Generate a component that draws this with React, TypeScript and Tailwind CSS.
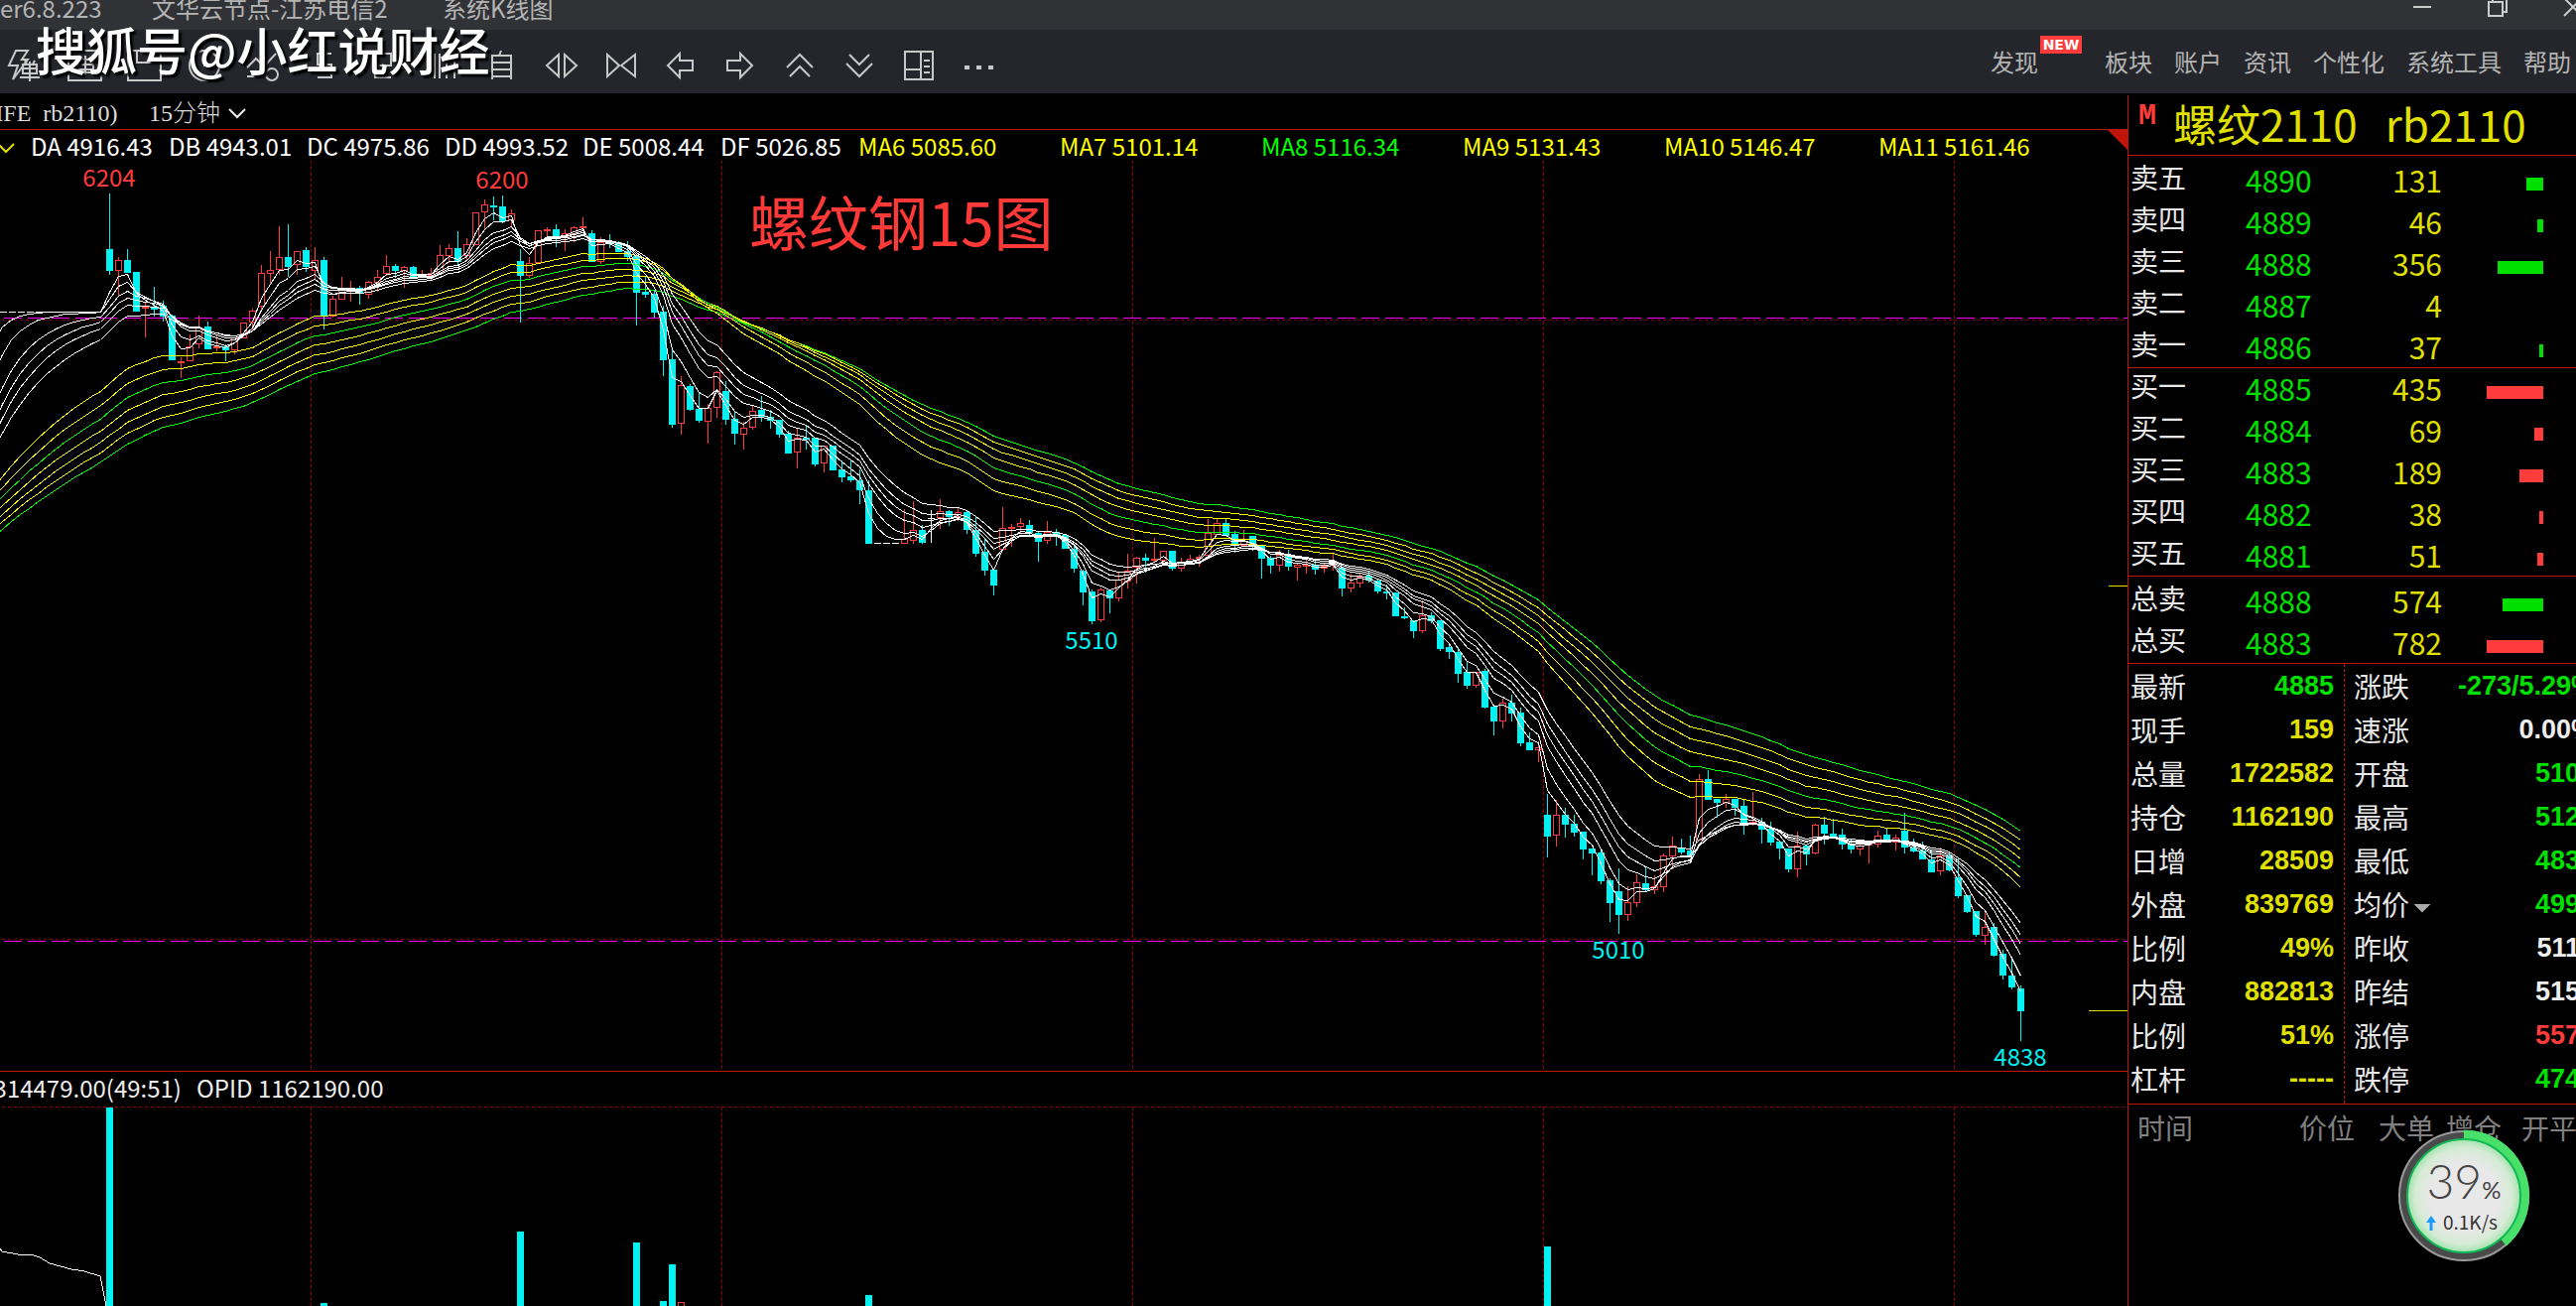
import { ReactNode } from "react";
import clsx from "clsx";

type Candle = [high: number, top: number, bottom: number, low: number, up: 0 | 1];

type BookRow = {
	label: string,
	price: number,
	volume: number,
	bar: number,
}

type Stat = {
	label: string,
	value: string,
	tone: "green" | "yellow" | "white" | "red",
	cut?: boolean,
	menu?: boolean,
}

const STEP = 9;
const FIRST_X = 110;
const TOP = 162;
const VOLUME_TOP = 1115;
const FLAT = 314;

const candles: Candle[] = [
	[195, 251, 273, 277, 0], [259, 262, 273, 298, 1], [251, 262, 275, 275, 0], [274, 274, 314, 314, 0], [305, 309, 311, 340, 1],
	[289, 309, 312, 319, 0], [303, 308, 319, 324, 0], [317, 318, 363, 363, 0], [360, 364, 366, 381, 1], [337, 349, 364, 364, 1],
	[318, 330, 347, 351, 1], [324, 329, 352, 352, 0], [337, 349, 351, 354, 1], [347, 349, 353, 364, 0], [340, 340, 353, 357, 1],
	[325, 325, 341, 341, 1], [311, 313, 325, 333, 1], [267, 275, 309, 313, 1], [253, 272, 276, 286, 1], [228, 259, 272, 277, 1],
	[226, 259, 269, 279, 0], [253, 253, 267, 277, 1], [249, 252, 269, 274, 0], [249, 262, 273, 282, 1], [259, 262, 319, 332, 0],
	[298, 301, 319, 320, 1], [279, 292, 302, 302, 1], [283, 291, 293, 304, 1], [288, 290, 296, 307, 0], [283, 284, 297, 301, 1],
	[272, 279, 285, 294, 1], [257, 268, 276, 278, 1], [266, 268, 273, 280, 0], [268, 269, 273, 290, 1], [268, 269, 280, 280, 0],
	[272, 277, 279, 280, 1], [270, 275, 278, 283, 1], [247, 257, 276, 277, 1], [246, 250, 258, 265, 1], [233, 250, 264, 267, 0],
	[240, 246, 258, 262, 1], [214, 214, 247, 247, 1], [201, 206, 214, 231, 1], [198, 207, 209, 222, 0], [197, 208, 223, 225, 0],
	[211, 215, 222, 230, 1], [251, 263, 278, 325, 0], [259, 265, 278, 280, 1], [232, 232, 265, 265, 1], [229, 231, 233, 238, 1],
	[226, 231, 239, 249, 0], [231, 235, 239, 253, 1], [228, 229, 236, 244, 1], [219, 228, 230, 233, 1], [232, 235, 264, 264, 0],
	[239, 244, 264, 266, 1], [236, 243, 245, 250, 0], [243, 244, 254, 254, 0], [243, 253, 259, 263, 0], [257, 258, 295, 328, 0],
	[278, 294, 297, 300, 0], [292, 296, 315, 320, 0], [308, 314, 363, 379, 0], [353, 362, 428, 431, 0], [379, 388, 427, 438, 1],
	[387, 389, 413, 414, 0], [395, 412, 424, 426, 0], [407, 411, 425, 447, 1], [374, 375, 411, 421, 1], [384, 394, 423, 428, 0],
	[414, 422, 437, 448, 0], [425, 431, 438, 453, 1], [409, 414, 431, 433, 1], [399, 413, 420, 425, 0], [413, 420, 424, 432, 0],
	[423, 423, 438, 441, 0], [434, 437, 457, 457, 0], [432, 441, 456, 472, 1], [429, 441, 443, 453, 0], [441, 441, 468, 470, 0],
	[449, 449, 467, 476, 1], [449, 449, 474, 474, 0], [464, 473, 481, 486, 0], [463, 480, 484, 486, 0], [473, 484, 494, 508, 0],
	[484, 494, 548, 548, 0], [547, 547, 547, 547, 0], [547, 547, 547, 547, 0], [547, 547, 547, 547, 0], [513, 543, 548, 548, 1],
	[505, 534, 545, 548, 1], [529, 534, 547, 548, 0], [514, 522, 522, 547, 0], [503, 515, 522, 533, 1], [514, 515, 521, 530, 0],
	[511, 516, 521, 525, 1], [515, 516, 534, 538, 0], [521, 534, 558, 561, 0], [543, 556, 575, 580, 0], [574, 574, 590, 600, 0],
	[511, 532, 554, 554, 1], [528, 531, 533, 551, 1], [522, 527, 531, 537, 1], [524, 529, 537, 540, 0], [536, 537, 546, 566, 0],
	[525, 536, 545, 548, 1], [533, 536, 539, 550, 0], [538, 539, 553, 553, 0], [548, 553, 573, 577, 0], [574, 575, 597, 610, 0],
	[594, 596, 626, 629, 0], [592, 594, 625, 627, 1], [594, 595, 603, 618, 0], [576, 584, 603, 606, 1], [558, 575, 586, 593, 1],
	[561, 562, 572, 588, 1], [558, 562, 565, 577, 0], [542, 563, 565, 567, 1], [555, 555, 565, 567, 1], [555, 555, 573, 575, 0],
	[562, 566, 573, 576, 1], [559, 563, 566, 567, 1], [559, 561, 563, 571, 1], [523, 537, 560, 560, 1], [522, 527, 539, 539, 1],
	[523, 527, 540, 540, 0], [535, 538, 548, 557, 0], [534, 545, 550, 550, 1], [540, 540, 550, 555, 0], [549, 549, 563, 583, 0],
	[560, 562, 570, 578, 0], [554, 559, 570, 576, 1], [554, 559, 571, 575, 0], [567, 569, 572, 585, 1], [563, 569, 571, 578, 1],
	[565, 569, 574, 579, 0], [567, 570, 573, 577, 1], [557, 567, 570, 575, 1], [572, 572, 593, 601, 0], [578, 587, 593, 597, 1],
	[578, 581, 588, 592, 1], [575, 580, 585, 587, 0], [583, 585, 596, 598, 0], [589, 596, 598, 604, 0], [597, 597, 621, 621, 0],
	[612, 621, 623, 624, 0], [625, 625, 636, 643, 0], [605, 620, 636, 638, 1], [617, 620, 626, 628, 0], [625, 625, 654, 656, 0],
	[649, 652, 657, 664, 0], [652, 657, 679, 688, 0], [667, 677, 691, 694, 0], [677, 677, 691, 693, 1], [674, 676, 713, 714, 0],
	[712, 712, 727, 741, 0], [704, 708, 727, 734, 1], [700, 708, 719, 727, 0], [713, 718, 749, 752, 0], [738, 748, 756, 756, 0],
	[747, 753, 756, 768, 1], [800, 821, 843, 864, 0], [806, 821, 842, 853, 1], [814, 821, 831, 844, 0], [821, 830, 839, 843, 0],
	[838, 838, 856, 866, 0], [855, 855, 860, 882, 0], [857, 859, 888, 891, 0], [885, 887, 910, 929, 0], [875, 898, 922, 941, 0],
	[893, 909, 922, 928, 1], [881, 889, 910, 914, 1], [873, 890, 897, 899, 0], [882, 893, 897, 901, 1], [860, 862, 894, 899, 1],
	[843, 852, 863, 876, 1], [845, 854, 859, 861, 0], [842, 857, 862, 862, 0], [780, 785, 847, 847, 1], [776, 785, 806, 806, 0],
	[805, 805, 809, 824, 0], [800, 805, 809, 814, 1], [805, 805, 814, 822, 0], [805, 812, 830, 841, 0], [798, 828, 830, 832, 1],
	[824, 828, 836, 850, 0], [828, 835, 849, 852, 0], [847, 848, 855, 866, 0], [855, 855, 876, 879, 0], [838, 852, 876, 884, 1],
	[852, 852, 861, 872, 0], [830, 831, 860, 861, 1], [823, 831, 840, 851, 0], [825, 840, 843, 845, 0], [835, 841, 851, 856, 0],
	[845, 850, 856, 860, 0], [850, 852, 856, 862, 1], [847, 850, 852, 870, 1], [837, 842, 851, 854, 1], [834, 841, 849, 849, 0],
	[841, 844, 849, 857, 1], [819, 837, 854, 860, 0], [845, 854, 858, 859, 0], [848, 857, 866, 866, 0], [856, 866, 879, 879, 0],
	[854, 862, 878, 882, 1], [858, 862, 877, 878, 0], [865, 884, 903, 905, 0], [902, 902, 919, 920, 0], [918, 918, 942, 944, 0],
	[919, 934, 943, 952, 1], [930, 934, 963, 964, 0], [957, 961, 983, 987, 0], [966, 983, 995, 997, 0], [993, 996, 1019, 1049, 0],
];

// period, colour, distance below the flat price where the line enters on the left
const averages: [number, string, number][] = [
	[60, "#00ff00", 226], [55, "#ffff00", 219], [50, "#ffff00", 212], [45, "#ffff00", 204],
	[40, "#00ff00", 196], [35, "#ffff00", 187], [30, "#ffff00", 177],
	[15, "#ffffff", 139], [12, "#ffffff", 126], [10, "#ffffff", 114], [8, "#ffffff", 98], [5, "#ffffff", 64], [3, "#ffffff", 30],
];

const gridX = [313, 727, 1141, 1555, 1969];

const priceLabels = [
	{ text: "6204", x: 110, y: 188, color: "#ff3c3c" },
	{ text: "6200", x: 506, y: 190, color: "#ff3c3c" },
	{ text: "5510", x: 1100, y: 654, color: "#00f0f0" },
	{ text: "5010", x: 1631, y: 966, color: "#00f0f0" },
	{ text: "4838", x: 2036, y: 1074, color: "#00f0f0" },
];

const volumes = [
	{ x: 110, y: 1116 }, { x: 326, y: 1313 }, { x: 524, y: 1241 }, { x: 641, y: 1252 },
	{ x: 668, y: 1311 }, { x: 677, y: 1274 }, { x: 875, y: 1305 }, { x: 1559, y: 1256 },
];

const dLines = ["DA 4916.43", "DB 4943.01", "DC 4975.86", "DD 4993.52", "DE 5008.44", "DF 5026.85"];
const maLines = ["MA6 5085.60", "MA7 5101.14", "MA8 5116.34", "MA9 5131.43", "MA10 5146.47", "MA11 5161.46"];

const sells: BookRow[] = [
	{ label: "卖五", price: 4890, volume: 131, bar: 17 },
	{ label: "卖四", price: 4889, volume: 46, bar: 6 },
	{ label: "卖三", price: 4888, volume: 356, bar: 46 },
	{ label: "卖二", price: 4887, volume: 4, bar: 0 },
	{ label: "卖一", price: 4886, volume: 37, bar: 4 },
];

const buys: BookRow[] = [
	{ label: "买一", price: 4885, volume: 435, bar: 57 },
	{ label: "买二", price: 4884, volume: 69, bar: 9 },
	{ label: "买三", price: 4883, volume: 189, bar: 24 },
	{ label: "买四", price: 4882, volume: 38, bar: 4 },
	{ label: "买五", price: 4881, volume: 51, bar: 6 },
];

const totals: BookRow[] = [
	{ label: "总卖", price: 4888, volume: 574, bar: 41 },
	{ label: "总买", price: 4883, volume: 782, bar: 57 },
];

const leftStats: Stat[] = [
	{ label: "最新", value: "4885", tone: "green" },
	{ label: "现手", value: "159", tone: "yellow" },
	{ label: "总量", value: "1722582", tone: "yellow" },
	{ label: "持仓", value: "1162190", tone: "yellow" },
	{ label: "日增", value: "28509", tone: "yellow" },
	{ label: "外盘", value: "839769", tone: "yellow" },
	{ label: "比例", value: "49%", tone: "yellow" },
	{ label: "内盘", value: "882813", tone: "yellow" },
	{ label: "比例", value: "51%", tone: "yellow" },
	{ label: "杠杆", value: "-----", tone: "yellow" },
];

const rightStats: Stat[] = [
	{ label: "涨跌", value: "-273/5.29%", tone: "green" },
	{ label: "速涨", value: "0.00%", tone: "white" },
	{ label: "开盘", value: "510", tone: "green", cut: true },
	{ label: "最高", value: "512", tone: "green", cut: true },
	{ label: "最低", value: "483", tone: "green", cut: true },
	{ label: "均价", value: "499", tone: "green", cut: true, menu: true },
	{ label: "昨收", value: "511", tone: "white", cut: true },
	{ label: "昨结", value: "515", tone: "white", cut: true },
	{ label: "涨停", value: "557", tone: "red", cut: true },
	{ label: "跌停", value: "474", tone: "green", cut: true },
];

const menus = ["板块", "账户", "资讯", "个性化", "系统工具", "帮助"];

const tools: { name: string, icon: ReactNode }[] = [
	{ name: "闪电下单", icon: <><path d="M8 5H20L14 14H20L5 34L10 20H1Z" transform="translate(2 0)" /><path d="M17 19H31V28H17ZM17 23H31M24 16V36M14 32H34M19 15L21 19M29 15L27 19" /></> },
	{ name: "下单", icon: <><path d="M3 5H36V35H3Z" /><path d="M12 14H28V24H12ZM12 19H28M20 10V30M9 27H31" /></> },
	{ name: "窗口", icon: <path d="M3 5H36V35H3ZM12 5V17H28V5" /> },
	{ name: "时间", icon: <><circle cx="20" cy="20" r="15" /><path d="M20 11V20H28" /></> },
	{ name: "画线", icon: <><path d="M3 22L12 13L20 21L32 8M3 31H14" /><circle cx="28" cy="29" r="6" /></> },
	{ name: "周期", icon: <path d="M28 8H14V19H28V32H14" /> },
	{ name: "叠加", icon: <path d="M12 8H28V20H12ZM12 20V32H28" /> },
	{ name: "副图", icon: <path d="M12 8V33M17 8V33M24 8V33M32 8V33" /> },
	{ name: "自选", icon: <path d="M10 10H29V34M10 9V34M10 17H29M10 24H29M10 31H29M19 5L17 10" /> },
	{ name: "放宽", icon: <path d="M17 9V31L5 20ZM23 9V31L35 20Z" /> },
	{ name: "缩窄", icon: <path d="M6 9V31L18 20ZM34 9V31L20 20Z" /> },
	{ name: "左移", icon: <path d="M19 8V15H32V25H19V32L7 20Z" /> },
	{ name: "右移", icon: <path d="M20 8V15H7V25H20V32L32 20Z" /> },
	{ name: "上翻", icon: <path d="M7 22L20 9L33 22M10 31L20 21L30 31" /> },
	{ name: "下翻", icon: <path d="M7 18L20 31L33 18M10 9L20 19L30 9" /> },
	{ name: "布局", icon: <path d="M6 6H34V34H6ZM22 6V34M6 24H22M25 15H31M25 21H31M25 27H31" /> },
	{ name: "更多", icon: <path d="M6 22H11M18 22H23M30 22H35" strokeWidth="4" /> },
];

function emaPoints(period: number, offset: number){
	const a = 2 / (period + 1);
	let value = FLAT + offset;
	const points: string[] = [`-7,${Math.round(value) + 0.5}`];

	for (let i = -12; i < candles.length; i++){
		const c = candles[i];
		const close = i < 0 ? FLAT : c[4] ? c[1] : c[2];
		value = value + a * (close - value);
		points.push(`${FIRST_X + i * STEP + 0.5},${Math.round(value) + 0.5}`);
	}
	return points.join(" ");
}

function CandleShape({ candle, x }: { candle: Candle, x: number }){
	const [high, top, bottom, low, up] = candle;

	if (top === bottom){
		return <path d={`M${x - 3} ${top + 0.5}H${x + 4}M${x + 0.5} ${high}V${low}`} stroke="#fff" />
	}
	if (up){
		return(
			<g stroke="#ff3c3c" fill="none">
				<path d={`M${x + 0.5} ${high}V${top}M${x + 0.5} ${bottom}V${low}`} />
				<rect x={x - 2.5} y={top + 0.5} width={6} height={bottom - top - 1} />
			</g>
		)
	}
	return(
		<g fill="#00f2f2">
			<rect x={x} y={high} width={1} height={low - high} />
			<rect x={x - 3} y={top} width={7} height={Math.max(bottom - top, 2)} />
		</g>
	)
}

function PriceChart(){
	return(
		<svg className="block h-[917px] w-full shrink-0 font-['Noto_Sans_CJK_SC',sans-serif]" shapeRendering="crispEdges">
			<g transform={`translate(0 ${-TOP})`}>
				{gridX.map(x => <path key={x} d={`M${x + 0.5} 161V1079`} stroke="#8c0000" strokeDasharray="4 2" />)}
				{[322, 946].map(y => <path key={y} d={`M2 ${y + 0.5}H2600`} stroke="#8c0000" strokeDasharray="3 3" />)}
				{[320, 948].map(y => <path key={y} d={`M-20 ${y + 0.5}H2600`} stroke="#ff00ff" strokeDasharray="18 6" />)}
				<path d="M0 314.5H101" stroke="#fff" strokeDasharray="7 2" />
				{candles.map((candle, i) => <CandleShape key={i} candle={candle} x={FIRST_X + i * STEP} />)}
				{averages.map(([period, color, offset]) => (
					<polyline key={period} points={emaPoints(period, offset)} fill="none" stroke={color} />
				))}
				{priceLabels.map(({ text, x, y, color }) => (
					<text key={text} x={x} y={y} fill={color} fontSize={24} textAnchor="middle">{text}</text>
				))}
				<text x={755} y={248} fill="#ff3838" fontSize={60}>螺纹钢15图</text>
			</g>
		</svg>
	)
}

function VolumeChart(){
	return(
		<svg className="block min-h-0 w-full flex-1" shapeRendering="crispEdges">
			<g transform={`translate(0 ${-VOLUME_TOP})`}>
				{gridX.map(x => <path key={x} d={`M${x + 0.5} ${VOLUME_TOP}V1400`} stroke="#8c0000" strokeDasharray="4 2" />)}
				<path d="M2 1115.5H2600" stroke="#8c0000" strokeDasharray="3 3" />
				{volumes.map(({ x, y }) => <rect key={x} x={x - 3} y={y} width={7} height={300} fill="#00f2f2" />)}
				<rect x={683.5} y={1312.5} width={6} height={100} fill="none" stroke="#ff3c3c" />
				<path d="M0 1258L2 1261L18 1264L34 1265L40 1267L50 1273L72 1279L85 1281L101 1286L107 1316" fill="none" stroke="#fff" />
			</g>
		</svg>
	)
}

function BookTable({ rows, className }: { rows: BookRow[], className: string }){
	return(
		<div className={clsx("shrink-0 overflow-hidden border-b border-[#c01408]", className)}>
			<table className="w-[418px] table-fixed border-collapse">
				<colgroup>
					<col className="w-[118px]" />
					<col className="w-[72px]" />
					<col className="w-[126px]" />
					<col />
				</colgroup>
				<tbody>
					{rows.map(row => (
						<tr key={row.label} className="h-[42px] text-[30px] leading-[36px]">
							<th scope="row" className="p-0 pb-2 pl-0.5 text-left text-[28px] leading-[34px] font-normal text-[#e8e8e8]">{row.label}</th>
							<td className="p-0 pb-0.5 text-[#00e000]">{row.price}</td>
							<td className="p-0 pb-0.5 text-right text-[#e0e000]">{row.volume}</td>
							<td className="p-0 pt-1.5">
								<div
									className={clsx("ml-auto h-[13px]", row.label.includes("卖") ? "bg-[#00e000]" : "bg-[#ff3c3c]")}
									style={{ width: row.bar }}
								/>
							</td>
						</tr>
					))}
				</tbody>
			</table>
		</div>
	)
}

function StatList({ stats, className }: { stats: Stat[], className: string }){
	return(
		<dl className={className}>
			{stats.map((stat, i) => (
				<div key={i} className="flex h-11 items-center justify-between leading-[44px]">
					<dt className="flex items-center gap-1 text-[28px] text-[#e8e8e8]">
						{stat.label}
						{stat.menu && (
							<button aria-label="选择均价" className="mt-2 h-[9px] w-[18px] bg-[#aaa] [clip-path:polygon(0_0,100%_0,50%_100%)]" />
						)}
					</dt>
					<dd
						className={clsx(
							"font-['Liberation_Sans',sans-serif] text-[27px] font-bold",
							stat.tone === "green" && "text-[#00e000]",
							stat.tone === "yellow" && "text-[#e0e000]",
							stat.tone === "white" && "text-[#eee]",
							stat.tone === "red" && "text-[#ff3c3c]",
							stat.cut && "pr-[15px]"
						)}
					>
						{stat.value}
					</dd>
				</div>
			))}
		</dl>
	)
}

function SpeedBall(){
	return(
		<div className="absolute right-[46px] bottom-[44px] size-[134px]">
			<svg viewBox="0 0 134 134" className="size-full">
				<defs>
					<radialGradient id="ball">
						<stop offset="0.6" stopColor="#e8e8e8" />
						<stop offset="0.85" stopColor="#d6ebd6" />
						<stop offset="1" stopColor="#a4e4ac" />
					</radialGradient>
				</defs>
				<circle cx="67" cy="67" r="65" fill="#4a4a4a" stroke="#9a9a9a" strokeWidth="2" />
				<path d="M67 5A62 62 0 0 1 107 114" fill="none" stroke="#48e068" strokeWidth="9" />
				<circle cx="67" cy="67" r="57" fill="url(#ball)" stroke="#10b858" strokeWidth="2" />
				<path d="M34 87L39 94H35.500V102H32.500V94H29Z" fill="#1e9bff" />
			</svg>
			<div className="absolute inset-x-0 top-[27px] flex items-baseline justify-center font-['Lato',sans-serif] leading-[50px] text-[#444]">
				<span className="text-[48px] font-light">39</span>
				<span className="text-[24px]">%</span>
			</div>
			<div className="absolute top-[81px] left-[46px] text-[19px] leading-6 text-[#333]">0.1K/s</div>
		</div>
	)
}

export default function App(){
	return(
		<div className="relative flex h-screen min-h-[1316px] w-full flex-col overflow-hidden bg-black font-['Noto_Sans_CJK_SC',sans-serif]">
			<header className="flex h-[30px] shrink-0 items-start overflow-hidden bg-[#303236] text-[24px] leading-[16px] text-[#b4b4b4]">
				<span className="w-[153px]">er6.8.223</span>
				<span className="w-[293px]">文华云节点-江苏电信2</span>
				<span className="flex-1">系统K线图</span>
				<button aria-label="最小化" className="w-[76px]">
					<svg className="h-[30px] w-[20px]"><path d="M1 7H19" stroke="#ccc" strokeWidth="2" /></svg>
				</button>
				<button aria-label="还原" className="w-[76px]">
					<svg className="h-[30px] w-[22px]" fill="none" stroke="#ccc" strokeWidth="2"><path d="M1 2H15V16H1ZM5 2V-2H19V12H15" /></svg>
				</button>
				<button aria-label="关闭" className="w-[13px] overflow-hidden">
					<svg className="h-[30px] w-[20px]" fill="none" stroke="#ccc" strokeWidth="2"><path d="M1 -2L19 16M19 -2L1 16" /></svg>
				</button>
			</header>

			<nav className="flex h-16 shrink-0 items-center justify-between bg-[#24262c]">
				<div className="-ml-1 flex items-center pt-2">
					{tools.map(({ name, icon }) => (
						<button key={name} aria-label={name} className="flex w-[60px] justify-center">
							<svg className="size-10" viewBox="0 0 40 40" fill="none" stroke="#c8c8c8" strokeWidth="2">{icon}</svg>
						</button>
					))}
				</div>
				<div className="flex items-center gap-[22px] pr-[5px] text-[24px] text-[#b4b4b4]">
					<button className="relative mr-[45px]">
						发现
						<span className="absolute -top-2 left-[50px] h-[18px] w-[42px] bg-[#ff3c3c] text-center font-['DejaVu_Sans',sans-serif] text-[14px] leading-[18px] font-bold text-white">NEW</span>
					</button>
					{menus.map(menu => <button key={menu}>{menu}</button>)}
				</div>
			</nav>

			<main className="flex min-h-0 w-full flex-1">
				<section className="flex min-w-0 flex-1 flex-col">
					<div className="flex h-9 shrink-0 items-center overflow-hidden font-['Liberation_Serif','Noto_Sans_CJK_SC',serif] text-[24px] leading-[36px] font-light whitespace-pre text-[#ddd]">
						<span className="-ml-[14px] w-[164px] pt-1">HFE  rb2110)</span>
						<button className="flex items-center gap-2 pt-1">
							15分钟
							<svg className="h-[12px] w-[18px]" fill="none" stroke="#eee" strokeWidth="2"><path d="M1 2L9 10L17 2" /></svg>
						</button>
					</div>
					<div className="flex h-8 shrink-0 items-center border-t border-[#c01408] text-[24px] leading-[31px] whitespace-nowrap text-white">
						<button aria-label="指标" className="w-[31px]">
							<svg className="mt-1.5 h-[12px] w-[16px]" fill="none" stroke="#e0e000" strokeWidth="2"><path d="M-2 1L6 9L14 1" /></svg>
						</button>
						{dLines.map(text => <span key={text} className="w-[139px] shrink-0">{text}</span>)}
						{maLines.map(text => (
							<span key={text} className={clsx("shrink-0", text.startsWith("MA10") ? "w-[216px]" : "w-[203px]", text.startsWith("MA8") ? "text-[#00ff00]" : "text-[#ffff00]")}>{text}</span>
						))}
						<span className="ml-auto h-5 w-5 self-start bg-[#c01408] [clip-path:polygon(0_0,100%_0,100%_100%)]" />
					</div>
					<div className="relative">
						<PriceChart />
						<div className="absolute top-[428px] right-0 h-px w-[19px] bg-[#e0e000]" />
						<div className="absolute top-[856px] right-0 h-px w-[39px] bg-[#e0e000]" />
					</div>
					<div className="flex h-9 shrink-0 border-t border-[#c01408] text-[24px] leading-[32px] whitespace-pre text-[#eee]">
						<span className="flex w-[198px] justify-end pr-[15px]">314479.00(49:51)</span>
						<span>OPID 1162190.00</span>
					</div>
					<VolumeChart />
				</section>

				<aside className="mt-0.5 flex w-[452px] shrink-0 flex-col overflow-hidden border-l border-[#c01408]">
					<div className="flex h-[61px] shrink-0 items-start border-b border-[#c01408] pl-2.5">
						<span className="w-[35px] pt-1.5 font-['Liberation_Mono',monospace] text-[30px] leading-[30px] font-bold text-[#ff3c3c]">M</span>
						<h1 className="flex gap-[28px] text-[44px] leading-[56px] text-[#e0e000]">
							<span>螺纹2110</span>
							<span>rb2110</span>
						</h1>
					</div>
					<BookTable rows={sells} className="h-[214px] pt-1" />
					<BookTable rows={buys} className="h-[210px]" />
					<BookTable rows={totals} className="h-[88px] pt-1" />
					<div className="flex h-[444px] shrink-0 border-b border-[#c01408]">
						<StatList stats={leftStats} className="w-[217px] shrink-0 pr-2.5 pl-0.5" />
						<StatList stats={rightStats} className="-mr-[19px] flex-1 border-l border-dashed border-[#c01408] pl-[9px]" />
					</div>
					<table className="w-[464px] table-fixed border-collapse">
						<thead>
							<tr className="text-left text-[28px] leading-[46px] text-[#808080]">
								<th className="w-[163px] p-0 pl-[9px] font-normal">时间</th>
								<th className="w-[80px] p-0 pl-[9px] font-normal">价位</th>
								<th className="w-[68px] p-0 pl-[9px] font-normal">大单</th>
								<th className="w-[76px] p-0 pl-[9px] font-normal">增仓</th>
								<th className="p-0 pl-[9px] font-normal">开平</th>
							</tr>
						</thead>
					</table>
				</aside>
			</main>

			<div className="absolute top-[22px] left-[36px] text-[51px] leading-[54px] font-medium text-white [text-shadow:3px_3px_2px_#000]">搜狐号@小红说财经</div>
			<SpeedBall />
		</div>
	);
}
